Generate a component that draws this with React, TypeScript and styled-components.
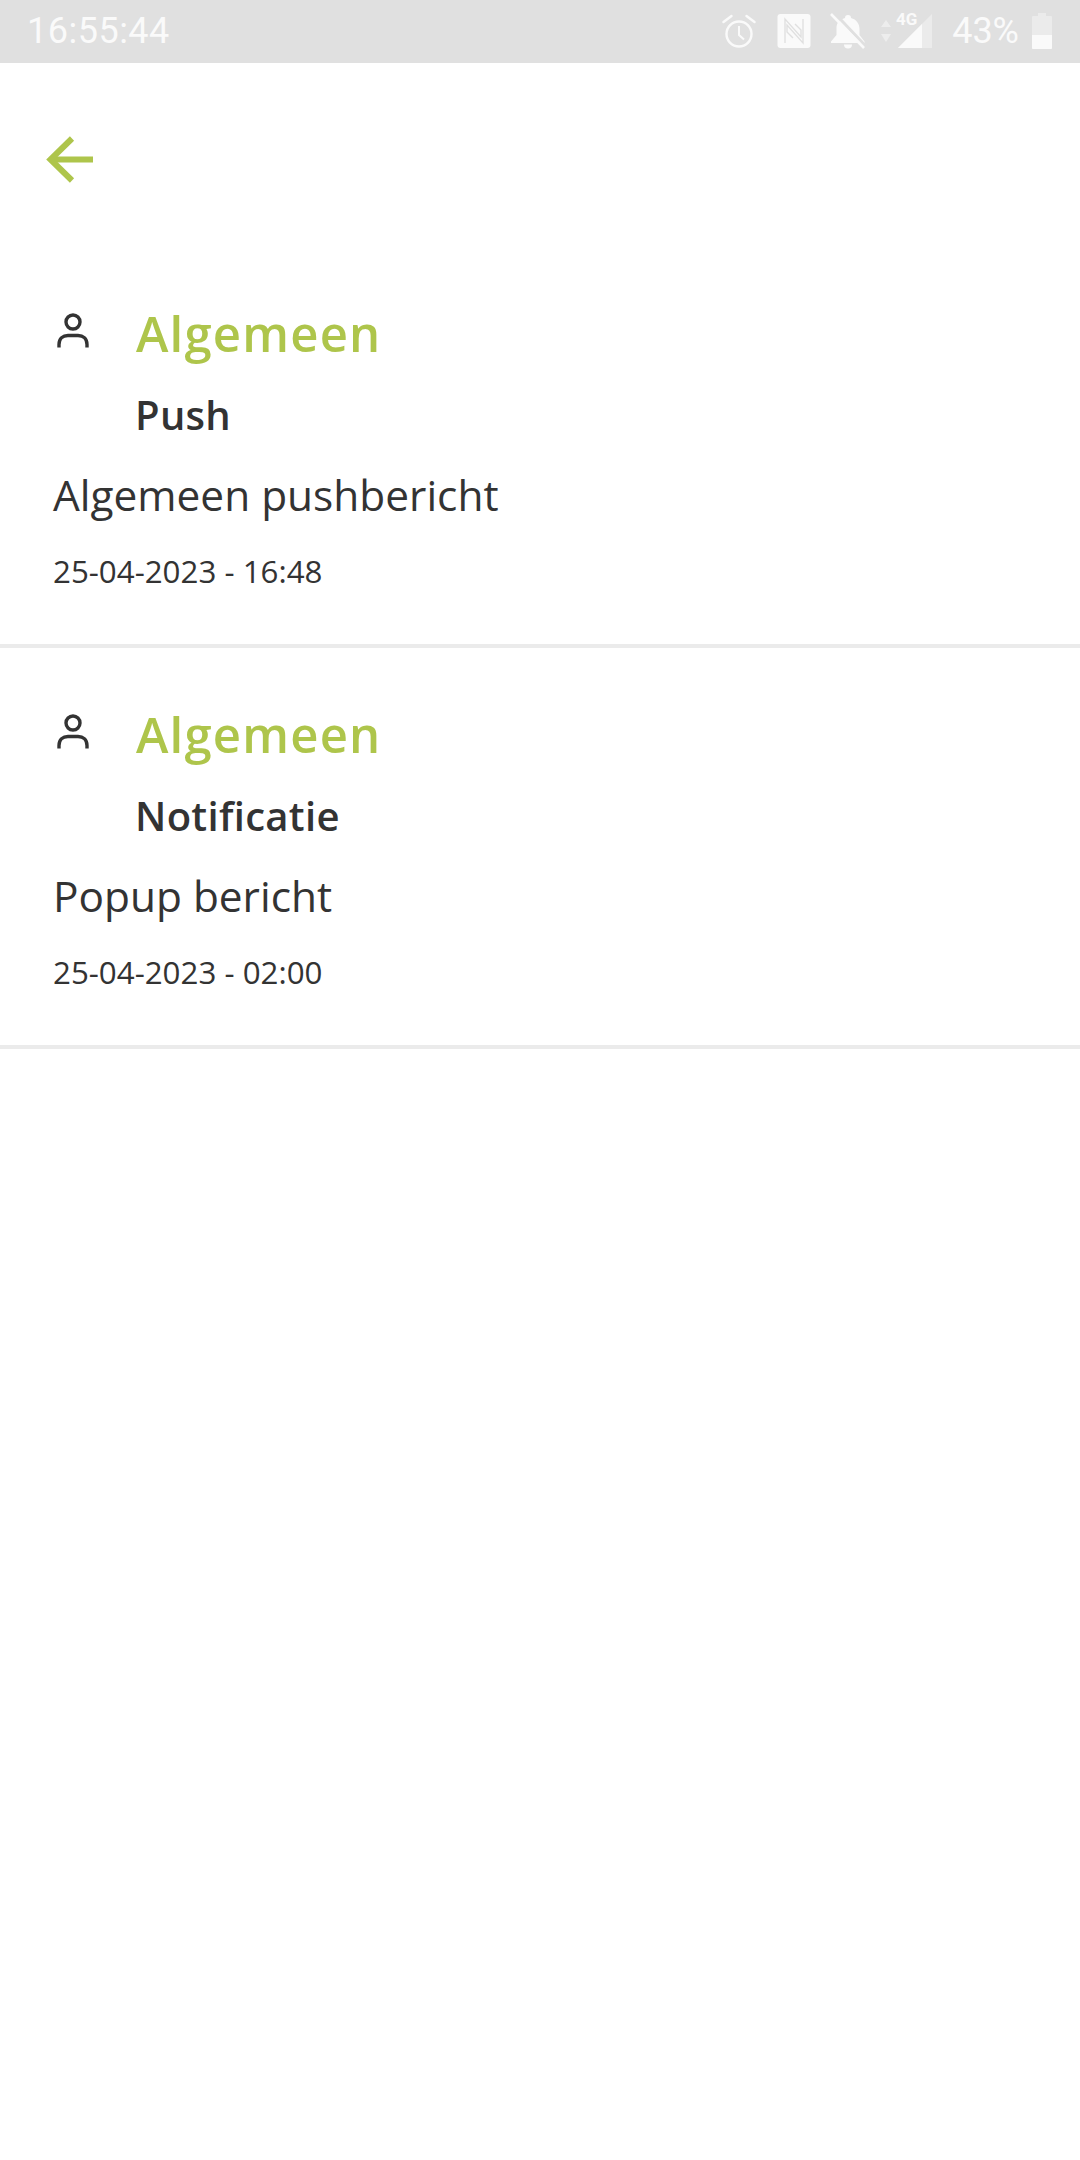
import React from "react";
import styled, { createGlobalStyle } from "styled-components";

const Global = createGlobalStyle`
  html, body { margin: 0; padding: 0; background: #ffffff; }
  body { font-family: "Open Sans", "Liberation Sans", sans-serif; }
`;

const Page = styled.div`
  width: 1080px;
  height: 2160px;
  background: #fff;
  overflow: hidden;
`;

const StatusBar = styled.div`
  height: 63px;
  background: #e0e0e0;
  display: flex;
  align-items: center;
  justify-content: space-between;
  padding: 0 28px 2px 27px;
  box-sizing: border-box;
  color: #fafafa;
  font-family: Roboto, sans-serif;
  font-size: 36px;
  font-weight: 400;
`;

const StatusClock = styled.span`
  line-height: 42px;
  letter-spacing: 0.5px;
`;

const StatusIcons = styled.div`
  display: flex;
  align-items: center;
`;

const StatusGlyph = styled.svg<{ $gap: number }>`
  display: block;
  margin-right: ${(p) => p.$gap}px;
  flex: none;
`;

const Percent = styled.span`
  margin-right: 13px;
  line-height: 42px;
`;

const Header = styled.header`
  height: 184px;
  padding: 72px 0 0 45px;
  box-sizing: border-box;
`;

const BackIcon = styled.svg`
  display: block;
  width: 50px;
  height: 50px;
`;

const Message = styled.article`
  height: 401px;
  box-sizing: border-box;
  border-bottom: 4px solid #ebebeb;
  padding: 54px 0 0 53px;
  color: #333333;
`;

const TitleRow = styled.div`
  display: flex;
  align-items: flex-start;
`;

const PersonIcon = styled.svg`
  display: block;
  width: 34px;
  height: 36px;
  margin: 12px 46px 0 3px;
  flex: none;
`;

const Title = styled.h2`
  margin: 0;
  font-size: 49px;
  line-height: 64px;
  font-weight: 600;
  color: #aec54b;
  letter-spacing: 1.2px;
`;

const Subject = styled.h3`
  margin: 25px 0 0 82px;
  font-size: 40px;
  line-height: 50px;
  font-weight: 600;
  color: #333333;
  letter-spacing: 0.3px;
`;

const Body = styled.p`
  margin: 28px 0 0;
  font-size: 42.4px;
  line-height: 54px;
  font-weight: 400;
  color: #333333;
`;

const DateLine = styled.p`
  margin: 28px 0 0;
  font-size: 31.3px;
  line-height: 42px;
  color: #333333;
`;

const messages = [
  { subject: "Push", body: "Algemeen pushbericht", date: "25-04-2023 - 16:48" },
  { subject: "Notificatie", body: "Popup bericht", date: "25-04-2023 - 02:00" },
];

export default function App() {
  return (
    <Page>
      <Global />
      <StatusBar>
        <StatusClock>16:55:44</StatusClock>
        <StatusIcons>
          <StatusGlyph $gap={21} width="34" height="36" viewBox="0 0 34 36" fill="none" stroke="#fafafa" strokeWidth="2.4">
            <circle cx="17" cy="21" r="12.5" />
            <path d="M17 13v9l5 4.500" strokeWidth="2" />
            <path d="M1.500 9l8-6M32.500 9l-8-6" strokeLinecap="round" />
          </StatusGlyph>
          <StatusGlyph $gap={19} width="34" height="36" viewBox="0 0 34 36">
            <rect x="0.5" y="1" width="33" height="34" rx="3" fill="#fafafa" />
            <path d="M8 30V6l16 18v-7l-6-6M26 6v24L10 12v7l6 6" fill="none" stroke="#e0e0e0" strokeWidth="1.400" />
          </StatusGlyph>
          <StatusGlyph $gap={14} width="36" height="36" viewBox="0 0 36 36">
            <path d="M18 2c2 0 3 1.300 3 3 5.500 1.400 8.500 6 8.500 11v6l5 6.500V30H1v-1.500L6.500 22v-7c0-5 3-8.600 8.500-10 0-1.700 1-3 3-3z" fill="#fafafa" />
            <path d="M14 31.500h8a4 4 0 0 1-8 0z" fill="#fafafa" />
            <path d="M3.500 -1l33 35" stroke="#e0e0e0" strokeWidth="3" />
            <path d="M1 1l33 34" stroke="#fafafa" strokeWidth="2.600" />
          </StatusGlyph>
          <StatusGlyph $gap={3} width="12" height="24" viewBox="0 0 12 24">
            <path d="M6 1l5 7H1zM6 23l5-8H1z" fill="#ededed" />
          </StatusGlyph>
          <StatusGlyph $gap={19} width="38" height="48" viewBox="-2 -6 38 48">
            <path d="M35 1v34H1z" fill="#ebebeb" />
            <path d="M25 11v24H1z" fill="#fafafa" />
            <text x="-1" y="12" fontFamily="Roboto, sans-serif" fontSize="17" fontWeight="700" fill="#fafafa">
              4G
            </text>
          </StatusGlyph>
          <Percent>43%</Percent>
          <StatusGlyph $gap={0} width="20" height="36" viewBox="0 0 20 36">
            <path d="M6 0h8v3h5a1 1 0 0 1 1 1v31a1 1 0 0 1-1 1H1a1 1 0 0 1-1-1V4a1 1 0 0 1 1-1h5z" fill="#ebebeb" />
            <path d="M0 22h20v13a1 1 0 0 1-1 1H1a1 1 0 0 1-1-1z" fill="#fafafa" />
          </StatusGlyph>
        </StatusIcons>
      </StatusBar>
      <Header>
        <BackIcon viewBox="0 0 50 50" fill="none" stroke="#aec54b" strokeWidth="6">
          <path d="M48 24.500H6" />
          <path d="M27 3.500L5.500 24.500 27 45.500" />
        </BackIcon>
      </Header>
      {messages.map((m) => (
        <Message key={m.subject}>
          <TitleRow>
            <PersonIcon viewBox="0 0 34 36" fill="none" stroke="#333333" strokeWidth="3.4">
              <circle cx="17" cy="9" r="7" />
              <path d="M3 34.500v-3c0-6 4-9 9-9h10c5 0 9 3 9 9v3" />
            </PersonIcon>
            <Title>Algemeen</Title>
          </TitleRow>
          <Subject>{m.subject}</Subject>
          <Body>{m.body}</Body>
          <DateLine>{m.date}</DateLine>
        </Message>
      ))}
    </Page>
  );
}
